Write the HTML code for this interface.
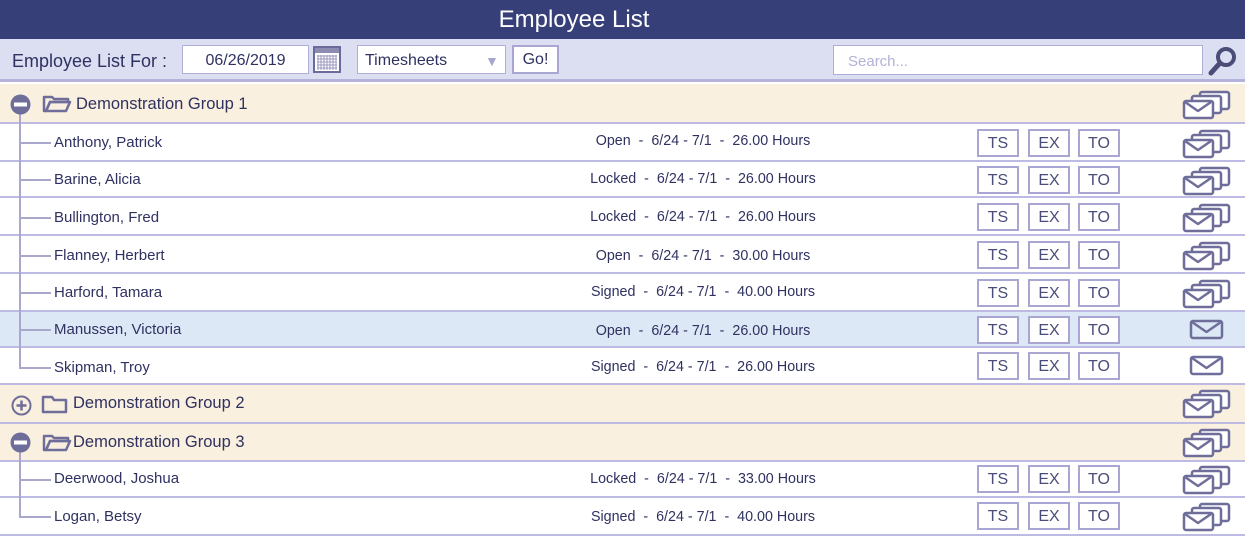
<!DOCTYPE html>
<html><head><meta charset="utf-8"><style>
*{box-sizing:border-box;margin:0;padding:0}
body{width:1245px;height:536px;overflow:hidden;background:#fff;font-family:"Liberation Sans",sans-serif;color:#2f3160;position:relative}
.hdr{position:absolute;left:0;top:0;width:1245px;height:39px;background:#363f78}
.hdr span{position:absolute;left:0;width:1148px;text-align:center;color:#fff;font-size:24px;line-height:40px}
.tb{position:absolute;left:0;top:39px;width:1245px;height:43px;background:#dcdff1;border-bottom:3px solid #b5b3dc}
.abs{position:absolute}
.inp{position:absolute;background:#fff;border:1px solid #b0aed8;font-size:16px;color:#2f3160}
.row{position:absolute;left:0;width:1245px;border-bottom:2px solid #bdbae3}
.grp{background:#faf0df}
.sel{background:#dce8f5}
.name{position:absolute;left:54px;font-size:15px}
.gname{position:absolute;font-size:16.5px}
.st{position:absolute;left:560px;width:286px;text-align:center;font-size:14.3px}
.b{position:absolute;width:42px;height:28px;border:2px solid #a9a6d3;text-align:center;line-height:25px;font-size:16px;color:#4a4c7a;background:#fff}
.env{position:absolute;left:1182px}
.vl{position:absolute;left:19px;width:2px;background:#aaa7cc}
.hl{position:absolute;left:19px;width:32px;height:2px;background:#aaa7cc}
</style></head><body>
<div class="hdr"><span>Employee List</span></div>
<div class="tb">
<div class="abs" style="left:12px;top:12px;font-size:18px">Employee List For :</div>
<div class="inp" style="left:182px;top:6px;width:127px;height:29px;text-align:center;line-height:30px">06/26/2019</div>
<svg class="abs" style="left:313px;top:7px" width="28" height="27"><rect x="1" y="1" width="26" height="25" fill="#fff" stroke="#6b6b9b" stroke-width="2"/><rect x="2" y="2" width="24" height="5" fill="#8d8cb3"/><path d="M4 10h20M4 13h20M4 16h20M4 19h20M4 22h20M5 9v15M8 9v15M11 9v15M14 9v15M17 9v15M20 9v15M23 9v15" stroke="#9998bd" stroke-width="1"/></svg>
<div class="inp" style="left:357px;top:6px;width:149px;height:29px;line-height:30px;padding-left:7px">Timesheets<span class="abs" style="left:127px;top:0;color:#a7a6d0;font-size:14px">▼</span></div>
<div class="inp" style="left:512px;top:6px;width:47px;height:29px;border:2px solid #a9a6d3;text-align:center;line-height:26px;font-size:16px">Go!</div>
<div class="inp" style="left:833px;top:6px;width:370px;height:30px;line-height:31px;padding-left:14px;color:#b3b1d8;font-size:15px">Search...</div>
<svg class="abs" style="left:1206px;top:6px" width="34" height="32"><circle cx="20" cy="12" r="8" fill="none" stroke="#4b4c78" stroke-width="4"/><path d="M14 18 L5 28" stroke="#4b4c78" stroke-width="5" stroke-linecap="round"/></svg>
</div>

<div class="row grp" style="top:84px;height:40px"></div>
<div class="row" style="top:124px;height:38px"></div>
<div class="row" style="top:162px;height:36px"></div>
<div class="row" style="top:198px;height:38px"></div>
<div class="row" style="top:236px;height:38px"></div>
<div class="row" style="top:274px;height:38px"></div>
<div class="row sel" style="top:312px;height:36px"></div>
<div class="row" style="top:348px;height:37px"></div>
<div class="row grp" style="top:385px;height:39px"></div>
<div class="row grp" style="top:424px;height:38px"></div>
<div class="row" style="top:462px;height:36px"></div>
<div class="row" style="top:498px;height:38px"></div>

<div class="vl" style="top:112px;height:256px"></div>
<div class="vl" style="top:450px;height:67px"></div>
<div class="hl" style="top:142px"></div><div class="hl" style="top:179px"></div><div class="hl" style="top:217px"></div><div class="hl" style="top:255px"></div><div class="hl" style="top:292px"></div><div class="hl" style="top:329px"></div><div class="hl" style="top:367px"></div><div class="hl" style="top:479px"></div><div class="hl" style="top:516px"></div>

<svg class="abs" style="left:10px;top:94px" width="21" height="21"><circle cx="10.5" cy="10.5" r="10" fill="#6f6e9b"/><rect x="4" y="8.5" width="13" height="4" fill="#fff"/></svg>
<svg class="abs" style="left:10px;top:432px" width="21" height="21"><circle cx="10.5" cy="10.5" r="10" fill="#6f6e9b"/><rect x="4" y="8.5" width="13" height="4" fill="#fff"/></svg>
<svg class="abs" style="left:11px;top:395px" width="21" height="21"><circle cx="10.5" cy="10.5" r="9" fill="none" stroke="#6f6e9b" stroke-width="2"/><path d="M10.5 5.5v10M5.5 10.5h10" stroke="#6f6e9b" stroke-width="2.5"/></svg>
<svg class="abs" style="left:42px;top:94px" width="30" height="20"><path d="M2 3h8l2 2h14v3H8L4 17H2z" fill="none" stroke="#6f6e9b" stroke-width="2.5" stroke-linejoin="round"/><path d="M8 8h20l-4 9H4z" fill="none" stroke="#6f6e9b" stroke-width="2.5" stroke-linejoin="round"/></svg>
<svg class="abs" style="left:42px;top:433px" width="30" height="20"><path d="M2 3h8l2 2h14v3H8L4 17H2z" fill="none" stroke="#6f6e9b" stroke-width="2.5" stroke-linejoin="round"/><path d="M8 8h20l-4 9H4z" fill="none" stroke="#6f6e9b" stroke-width="2.5" stroke-linejoin="round"/></svg>
<svg class="abs" style="left:41px;top:394px" width="28" height="21"><path d="M2 3h9l2 3h12v12H2z" fill="none" stroke="#6f6e9b" stroke-width="2.5" stroke-linejoin="round"/></svg>

<div class="gname" style="left:76px;top:95px">Demonstration Group 1</div>
<div class="gname" style="left:73px;top:394px">Demonstration Group 2</div>
<div class="gname" style="left:73px;top:433px">Demonstration Group 3</div>

<div class="name" style="top:134px">Anthony, Patrick</div>
<div class="name" style="top:171px">Barine, Alicia</div>
<div class="name" style="top:209px">Bullington, Fred</div>
<div class="name" style="top:247px">Flanney, Herbert</div>
<div class="name" style="top:284px">Harford, Tamara</div>
<div class="name" style="top:321px">Manussen, Victoria</div>
<div class="name" style="top:359px">Skipman, Troy</div>
<div class="name" style="top:470px">Deerwood, Joshua</div>
<div class="name" style="top:508px">Logan, Betsy</div>

<div class="st" style="top:133px">Open&nbsp; - &nbsp;6/24 - 7/1&nbsp; - &nbsp;26.00 Hours</div>
<div class="st" style="top:171px">Locked&nbsp; - &nbsp;6/24 - 7/1&nbsp; - &nbsp;26.00 Hours</div>
<div class="st" style="top:209px">Locked&nbsp; - &nbsp;6/24 - 7/1&nbsp; - &nbsp;26.00 Hours</div>
<div class="st" style="top:248px">Open&nbsp; - &nbsp;6/24 - 7/1&nbsp; - &nbsp;30.00 Hours</div>
<div class="st" style="top:284px">Signed&nbsp; - &nbsp;6/24 - 7/1&nbsp; - &nbsp;40.00 Hours</div>
<div class="st" style="top:323px">Open&nbsp; - &nbsp;6/24 - 7/1&nbsp; - &nbsp;26.00 Hours</div>
<div class="st" style="top:359px">Signed&nbsp; - &nbsp;6/24 - 7/1&nbsp; - &nbsp;26.00 Hours</div>
<div class="st" style="top:471px">Locked&nbsp; - &nbsp;6/24 - 7/1&nbsp; - &nbsp;33.00 Hours</div>
<div class="st" style="top:509px">Signed&nbsp; - &nbsp;6/24 - 7/1&nbsp; - &nbsp;40.00 Hours</div>

<div class="b" style="left:977px;top:129px">TS</div><div class="b" style="left:1028px;top:129px">EX</div><div class="b" style="left:1078px;top:129px">TO</div>
<div class="b" style="left:977px;top:166px">TS</div><div class="b" style="left:1028px;top:166px">EX</div><div class="b" style="left:1078px;top:166px">TO</div>
<div class="b" style="left:977px;top:203px">TS</div><div class="b" style="left:1028px;top:203px">EX</div><div class="b" style="left:1078px;top:203px">TO</div>
<div class="b" style="left:977px;top:241px">TS</div><div class="b" style="left:1028px;top:241px">EX</div><div class="b" style="left:1078px;top:241px">TO</div>
<div class="b" style="left:977px;top:279px">TS</div><div class="b" style="left:1028px;top:279px">EX</div><div class="b" style="left:1078px;top:279px">TO</div>
<div class="b" style="left:977px;top:316px">TS</div><div class="b" style="left:1028px;top:316px">EX</div><div class="b" style="left:1078px;top:316px">TO</div>
<div class="b" style="left:977px;top:352px">TS</div><div class="b" style="left:1028px;top:352px">EX</div><div class="b" style="left:1078px;top:352px">TO</div>
<div class="b" style="left:977px;top:465px">TS</div><div class="b" style="left:1028px;top:465px">EX</div><div class="b" style="left:1078px;top:465px">TO</div>
<div class="b" style="left:977px;top:502px">TS</div><div class="b" style="left:1028px;top:502px">EX</div><div class="b" style="left:1078px;top:502px">TO</div>

<svg class="env" style="top:90px" width="50" height="30"><g stroke="#6f6e9b" stroke-width="2.5" stroke-linejoin="round" fill="#fff"><rect x="18" y="2" width="29" height="17" rx="2"/><rect x="10" y="6" width="29" height="17" rx="2"/><rect x="2" y="11" width="29" height="17" rx="2"/><path d="M3 12l13 9 13-9" fill="none"/></g></svg>
<svg class="env" style="top:129px" width="50" height="30"><g stroke="#6f6e9b" stroke-width="2.5" stroke-linejoin="round" fill="#fff"><rect x="18" y="2" width="29" height="17" rx="2"/><rect x="10" y="6" width="29" height="17" rx="2"/><rect x="2" y="11" width="29" height="17" rx="2"/><path d="M3 12l13 9 13-9" fill="none"/></g></svg>
<svg class="env" style="top:166px" width="50" height="30"><g stroke="#6f6e9b" stroke-width="2.5" stroke-linejoin="round" fill="#fff"><rect x="18" y="2" width="29" height="17" rx="2"/><rect x="10" y="6" width="29" height="17" rx="2"/><rect x="2" y="11" width="29" height="17" rx="2"/><path d="M3 12l13 9 13-9" fill="none"/></g></svg>
<svg class="env" style="top:203px" width="50" height="30"><g stroke="#6f6e9b" stroke-width="2.5" stroke-linejoin="round" fill="#fff"><rect x="18" y="2" width="29" height="17" rx="2"/><rect x="10" y="6" width="29" height="17" rx="2"/><rect x="2" y="11" width="29" height="17" rx="2"/><path d="M3 12l13 9 13-9" fill="none"/></g></svg>
<svg class="env" style="top:241px" width="50" height="30"><g stroke="#6f6e9b" stroke-width="2.5" stroke-linejoin="round" fill="#fff"><rect x="18" y="2" width="29" height="17" rx="2"/><rect x="10" y="6" width="29" height="17" rx="2"/><rect x="2" y="11" width="29" height="17" rx="2"/><path d="M3 12l13 9 13-9" fill="none"/></g></svg>
<svg class="env" style="top:279px" width="50" height="30"><g stroke="#6f6e9b" stroke-width="2.5" stroke-linejoin="round" fill="#fff"><rect x="18" y="2" width="29" height="17" rx="2"/><rect x="10" y="6" width="29" height="17" rx="2"/><rect x="2" y="11" width="29" height="17" rx="2"/><path d="M3 12l13 9 13-9" fill="none"/></g></svg>
<svg class="env" style="top:389px" width="50" height="30"><g stroke="#6f6e9b" stroke-width="2.5" stroke-linejoin="round" fill="#fff"><rect x="18" y="2" width="29" height="17" rx="2"/><rect x="10" y="6" width="29" height="17" rx="2"/><rect x="2" y="11" width="29" height="17" rx="2"/><path d="M3 12l13 9 13-9" fill="none"/></g></svg>
<svg class="env" style="top:428px" width="50" height="30"><g stroke="#6f6e9b" stroke-width="2.5" stroke-linejoin="round" fill="#fff"><rect x="18" y="2" width="29" height="17" rx="2"/><rect x="10" y="6" width="29" height="17" rx="2"/><rect x="2" y="11" width="29" height="17" rx="2"/><path d="M3 12l13 9 13-9" fill="none"/></g></svg>
<svg class="env" style="top:465px" width="50" height="30"><g stroke="#6f6e9b" stroke-width="2.5" stroke-linejoin="round" fill="#fff"><rect x="18" y="2" width="29" height="17" rx="2"/><rect x="10" y="6" width="29" height="17" rx="2"/><rect x="2" y="11" width="29" height="17" rx="2"/><path d="M3 12l13 9 13-9" fill="none"/></g></svg>
<svg class="env" style="top:502px" width="50" height="30"><g stroke="#6f6e9b" stroke-width="2.5" stroke-linejoin="round" fill="#fff"><rect x="18" y="2" width="29" height="17" rx="2"/><rect x="10" y="6" width="29" height="17" rx="2"/><rect x="2" y="11" width="29" height="17" rx="2"/><path d="M3 12l13 9 13-9" fill="none"/></g></svg>
<svg class="abs" style="left:1189px;top:319px" width="36" height="22"><g stroke="#6f6e9b" stroke-width="2.5" stroke-linejoin="round" fill="none"><rect x="2" y="2" width="31" height="17" rx="2"/><path d="M3 3l14.5 10L32 3"/></g></svg>
<svg class="abs" style="left:1189px;top:355px" width="36" height="22"><g stroke="#6f6e9b" stroke-width="2.5" stroke-linejoin="round" fill="none"><rect x="2" y="2" width="31" height="17" rx="2"/><path d="M3 3l14.5 10L32 3"/></g></svg>
</body></html>
